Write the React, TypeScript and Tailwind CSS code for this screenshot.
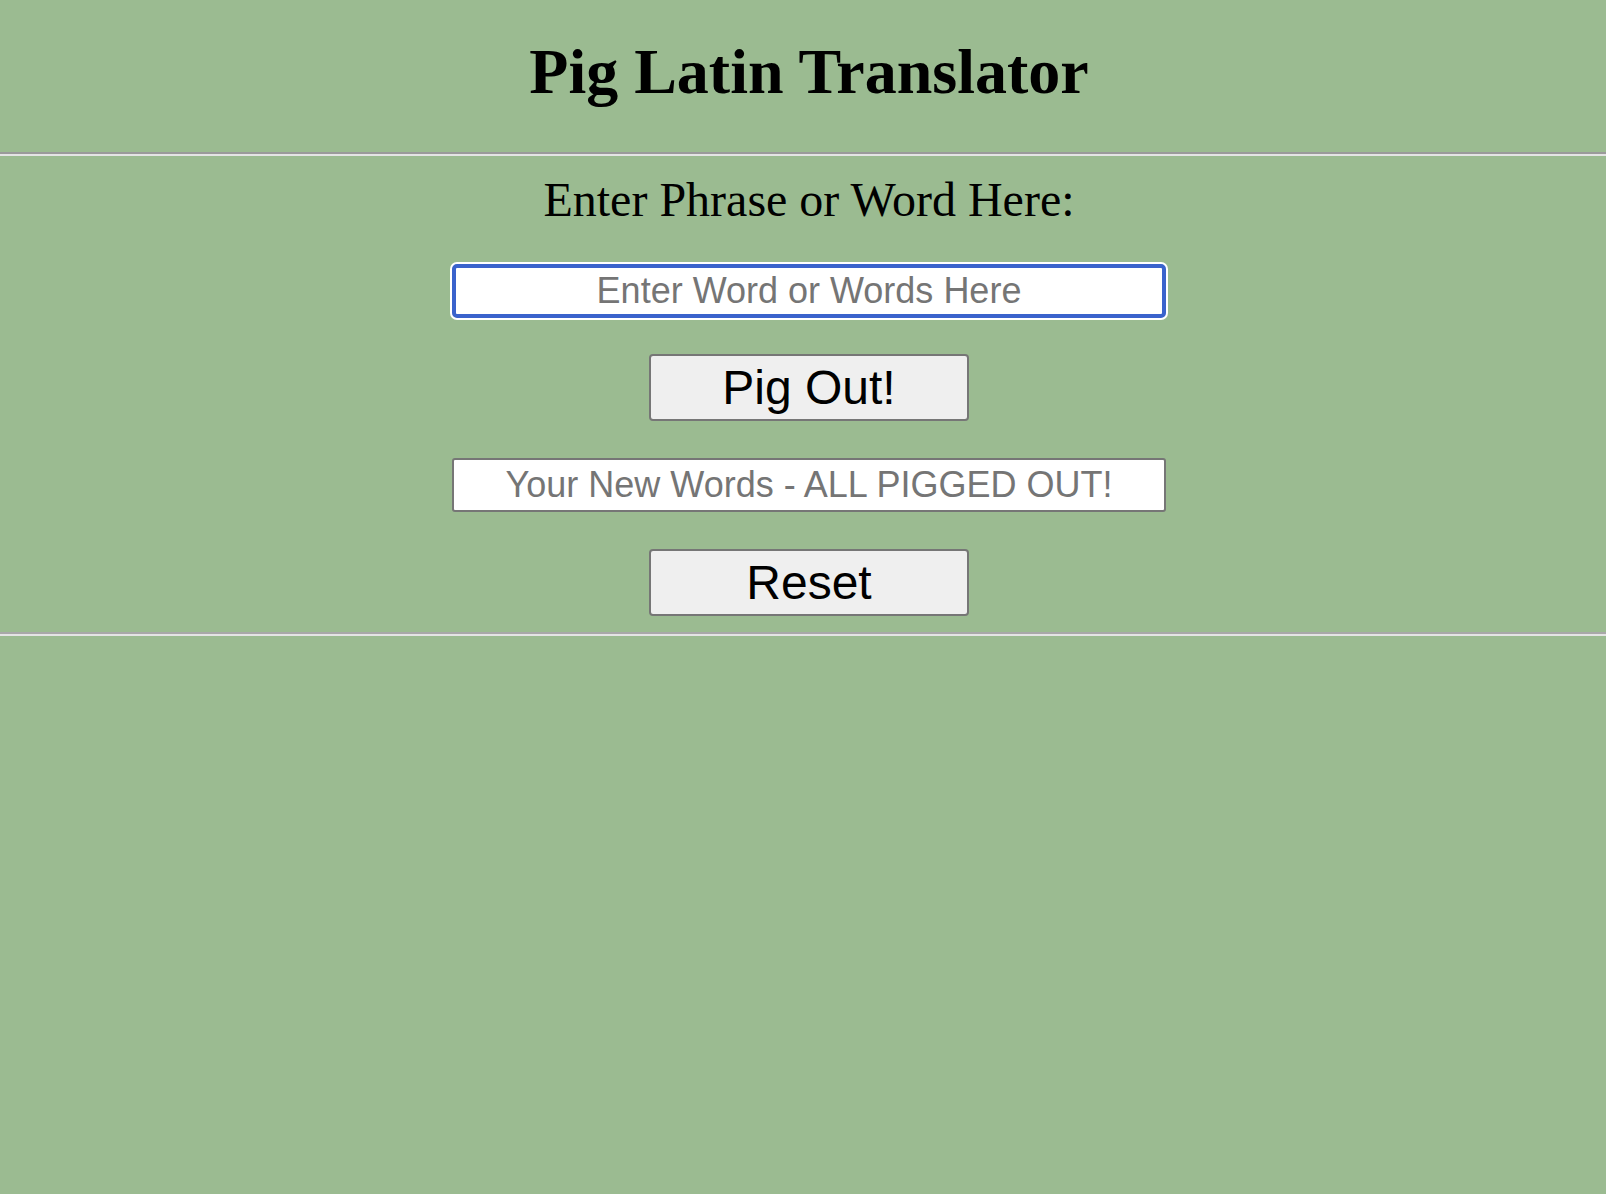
import { useState } from "react";

// english -> pig latin, one word at a time
function toPigLatin(text: string) {
  return text
    .trim()
    .split(/\s+/)
    .filter(Boolean)
    .map((word) => {
      const lower = word.toLowerCase();
      const idx = lower.search(/[aeiou]/);
      if (idx === 0) return lower + "way";
      if (idx === -1) return lower + "ay";
      return lower.slice(idx) + lower.slice(0, idx) + "ay";
    })
    .join(" ");
}

function App() {
  const [phrase, setPhrase] = useState("");
  const [result, setResult] = useState("");

  function pigOut() {
    setResult(toPigLatin(phrase));
  }

  function reset() {
    setPhrase("");
    setResult("");
  }

  return (
    <div className="min-h-screen bg-[#9bbb91] text-black">
      <h1 className="pl-[12px] pt-[40px] pb-[48px] text-center text-[64px] font-bold leading-none font-['Liberation_Serif',serif]">
        Pig Latin Translator
      </h1>
      <hr className="border-t-2 border-b-2 border-t-[#9a9a9a] border-b-[#e4e4e4]" />

      <div className="flex flex-col items-center pl-[12px] pt-[20px] pb-[16px]">
        <p className="text-[48px] leading-none font-['Liberation_Serif',serif]">
          Enter Phrase or Word Here:
        </p>
        <input
          autoFocus
          type="text"
          value={phrase}
          onChange={(e) => setPhrase(e.target.value)}
          placeholder="Enter Word or Words Here"
          className="mt-[40px] w-[714px] h-[54px] bg-white border-4 border-[#3a63cc] rounded-[5px] ring-2 ring-white outline-none text-center text-[36px] text-black placeholder:text-[#757575] font-['Liberation_Sans',Arial,sans-serif]"
        />
        <button
          onClick={pigOut}
          className="mt-[36px] w-[320px] h-[67px] bg-[#efefef] border-2 border-[#767676] rounded-[4px] text-[48px] leading-none text-black font-['Liberation_Sans',Arial,sans-serif]"
        >
          Pig Out!
        </button>
        <input
          readOnly
          type="text"
          value={result}
          placeholder="Your New Words - ALL PIGGED OUT!"
          className="mt-[37px] w-[714px] h-[54px] bg-white border-2 border-[#767676] rounded-[3px] outline-none text-center text-[36px] text-black placeholder:text-[#757575] font-['Liberation_Sans',Arial,sans-serif]"
        />
        <button
          onClick={reset}
          className="mt-[37px] w-[320px] h-[67px] bg-[#efefef] border-2 border-[#767676] rounded-[4px] text-[48px] leading-none text-black font-['Liberation_Sans',Arial,sans-serif]"
        >
          Reset
        </button>
      </div>
      <hr className="border-t-2 border-b-2 border-t-[#a8a8a8] border-b-[#e4e4e4]" />
    </div>
  );
}

export default App;
